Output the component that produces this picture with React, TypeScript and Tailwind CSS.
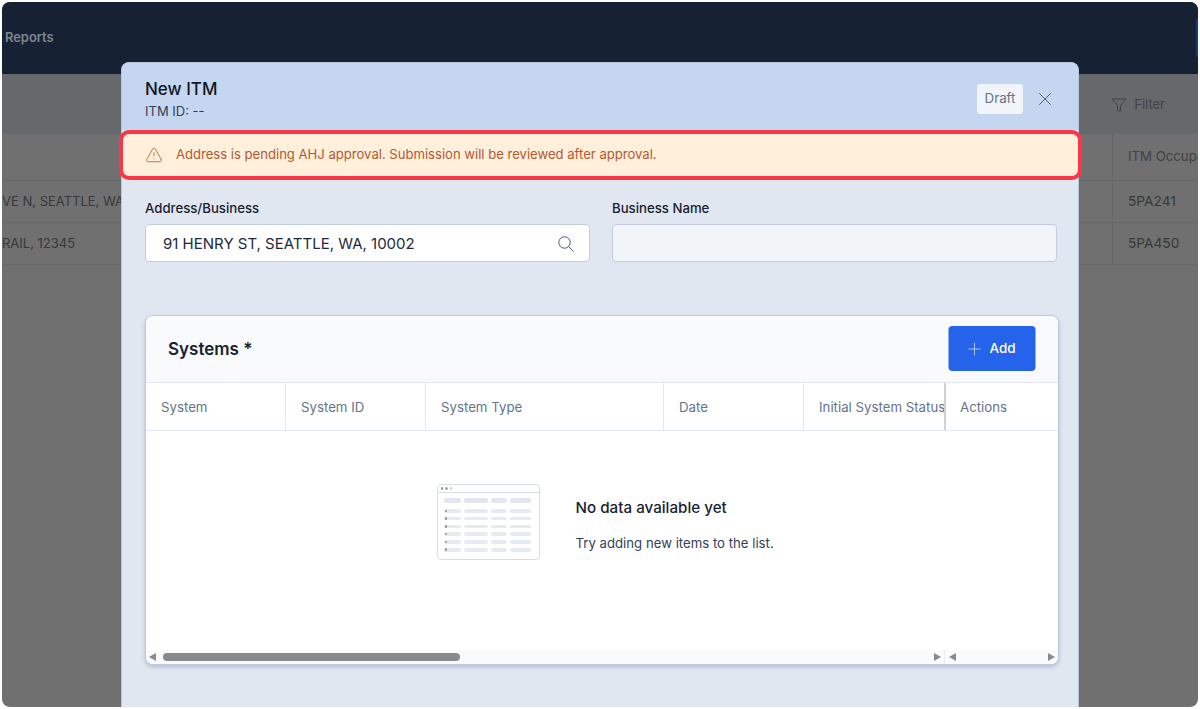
import { AlertTriangle, X, Plus } from 'lucide-react';

const columns = [
  { label: 'System', width: 'w-[140px] border-r' },
  { label: 'System ID', width: 'w-[140px] border-r' },
  { label: 'System Type', width: 'w-[238px] border-r' },
  { label: 'Date', width: 'w-[140px] border-r' },
  { label: 'Initial System Status', width: 'w-[140px]' },
];

function BackgroundPage() {
  return (
    <div className="flex flex-col h-full bg-[#707070]">
      <div className="h-[72px] shrink-0 bg-[#162133] flex items-center justify-between">
        <span className="pl-[3px] text-[12.9px] font-semibold text-[#7f858f]">Reports</span>
        <div className="w-[2px] h-[38px] bg-[#1b3a7a]" />
      </div>
      <div className="h-[60px] shrink-0 bg-[#66696b] flex items-center justify-end pr-[33px] pt-[2px]">
        <div className="flex items-center gap-[7px] text-[13px] text-[#3f4347]">
          <svg width="16" height="14" viewBox="0 0 16 14" fill="none" stroke="currentColor" strokeWidth="1" strokeLinejoin="round">
            <path d="M1 1h14L9.5 7.5V13H7.5L6.5 12V7.5Z" />
          </svg>
          <span>Filter</span>
        </div>
      </div>
      <div className="flex h-[47px] shrink-0 bg-[#707070] border-b border-[#666]">
        <div className="w-[1110px] shrink-0" />
        <div className="flex-1 border-l border-[#666] pl-[15px] flex items-center text-[13.2px] text-[#414141] whitespace-nowrap overflow-hidden">
          ITM Occupancy
        </div>
      </div>
      {[
        ['VE N, SEATTLE, WA', '5PA241'],
        ['RAIL, 12345', '5PA450'],
      ].map(([address, code]) => (
        <div key={code} className="flex h-[42px] shrink-0 border-b border-[#666] text-[#383838]">
          <div className="w-[1110px] shrink-0 flex items-center text-[13px]">{address}</div>
          <div className="flex-1 border-l border-[#666] pl-[15px] flex items-center text-[13.7px]">{code}</div>
        </div>
      ))}
    </div>
  );
}

function TableIllustration() {
  const widths = ['w-[17px]', 'w-[24px]', 'w-[16px]', 'w-[21px]'];
  return (
    <div className="w-[103px] h-[76px] rounded-[4px] border border-[#d5dde9] bg-white flex flex-col">
      <div className="h-[8px] border-b border-[#d5dde9] flex items-center gap-[2px] pl-[3px] shrink-0">
        <span className="w-[2.5px] h-[2.5px] rounded-full bg-[#8494ab]" />
        <span className="w-[2.5px] h-[2.5px] rounded-full bg-[#9aa7ba]" />
        <span className="w-[2.5px] h-[2.5px] rounded-full bg-[#c3ccd9]" />
      </div>
      <div className="flex gap-[3.3px] pl-[6px] pt-[5px]">
        {widths.map((w, i) => (
          <span key={i} className={`${w} h-[5px] rounded-[2px] bg-[#e2e7ef]`} />
        ))}
      </div>
      <div className="flex flex-col gap-[4.1px] pl-[6px] pt-[6px]">
        {[0, 1, 2, 3, 4, 5].map((row) => (
          <div key={row} className="flex gap-[3.3px] h-[3.7px]">
            {widths.map((w, i) => (
              <span key={i} className={`${w} h-full rounded-[2px] bg-[#e6ebf2] relative`}>
                {i === 0 && (
                  <span className="absolute left-[1px] top-[0.5px] w-[2.5px] h-[2.5px] rounded-full bg-[#8494ab]" />
                )}
              </span>
            ))}
          </div>
        ))}
      </div>
    </div>
  );
}

function Arrow({ dir }: { dir: 'left' | 'right' }) {
  return dir === 'left' ? (
    <span className="w-0 h-0 border-y-[4px] border-y-transparent border-r-[7px] border-r-[#8a8a8a]" />
  ) : (
    <span className="w-0 h-0 border-y-[4px] border-y-transparent border-l-[7px] border-l-[#8a8a8a]" />
  );
}

function SystemsCard() {
  return (
    <div className="h-[350px] rounded-[8px] border border-[#bcc9de] bg-white shadow-[0_2px_4px_rgba(100,116,139,0.35)] overflow-hidden flex flex-col">
      <div className="h-[67px] shrink-0 bg-[#f8fafc] flex items-center justify-between pl-[22px] pr-[22px] border-b border-[#e2e8f0]">
        <span className="text-[17px] font-semibold text-[#1a2230] mt-[1px]">Systems *</span>
        <button className="w-[87px] h-[45px] -mt-[1px] -ml-[1px] translate-x-[-0.5px] rounded-[4px] bg-[#2563eb] flex items-center justify-center gap-[5px] pr-[4px] text-[13.5px] font-medium text-white">
          <Plus size={20} strokeWidth={1.1} className="text-[#b6cbf8]" />
          Add
        </button>
      </div>
      <div className="h-[48px] shrink-0 flex border-b border-[#e2e8f0] text-[13.25px] text-[#64748b]">
        {columns.map((col) => (
          <div
            key={col.label}
            className={`${col.width} shrink-0 border-[#e2e8f0] pl-[15px] pt-[2px] flex items-center whitespace-nowrap overflow-hidden`}
          >
            {col.label}
          </div>
        ))}
        <div className="flex-1 pt-[2px] border-l-2 border-[#cfd2d6] pl-[14px] flex items-center">Actions</div>
      </div>
      <div className="flex-1 flex items-center justify-center gap-[36px] pl-[6px] pb-[37px]">
        <TableIllustration />
        <div className="flex flex-col gap-[14px] w-[198px] pt-[6px] whitespace-nowrap">
          <span className="text-[15.2px] font-medium text-[#1a2230]">No data available yet</span>
          <span className="text-[13.2px] text-[#334155]">Try adding new items to the list.</span>
        </div>
      </div>
      <div className="h-[14px] shrink-0 bg-[#fafafa] flex items-center">
        <div className="w-[799px] flex items-center pl-[3px] pr-[3px] border-r border-[#eee] h-full">
          <Arrow dir="left" />
          <div className="ml-[7px] w-[297px] h-[8px] rounded-full bg-[#8a8a8a]" />
          <div className="flex-1" />
          <Arrow dir="right" />
        </div>
        <div className="flex-1 flex items-center justify-between pl-[4px] pr-[3px]">
          <Arrow dir="left" />
          <Arrow dir="right" />
        </div>
      </div>
    </div>
  );
}

function Modal() {
  return (
    <div className="absolute left-[119px] top-[60px] w-[958px] h-[645px] rounded-t-[8px] border border-b-0 border-[#b8c7de] bg-[#e1e7f0] flex flex-col">
      <div className="h-[67px] shrink-0 rounded-t-[8px] bg-[#c5d6f0] flex items-center justify-between pl-[23px] pr-[22px] pt-[4px]">
        <div className="flex flex-col mt-[2px]">
          <span className="text-[17px] leading-[24px] font-medium text-[#111827]">New ITM</span>
          <span className="text-[13px] leading-[21px] text-[#334155]">ITM ID: --</span>
        </div>
        <div className="flex items-center gap-[11px]">
          <span className="w-[46px] h-[30px] rounded-[3px] bg-[#f1f5f9] flex items-center justify-center text-[13.3px] text-[#64748b]">
            Draft
          </span>
          <X size={22} strokeWidth={1} className="text-[#475569]" />
        </div>
      </div>
      <div className="h-[50px] shrink-0 -ml-[3px] -mr-[4px] rounded-[10px] border-4 border-[#fb3648] bg-[#ffefdb] flex items-center gap-[13px] pl-[22px] relative">
        <AlertTriangle size={18} strokeWidth={1.1} className="text-[#b25a30]" />
        <span className="text-[13.08px] text-[#b25a30]">
          Address is pending AHJ approval. Submission will be reviewed after approval.
        </span>
      </div>
      <div className="flex gap-[22px] pl-[23px] pr-[21px] pt-[19px]">
        <div className="flex-1 flex flex-col gap-[6px]">
          <label className="text-[13.2px] leading-[19px] font-medium text-[#1a2230]">Address/Business</label>
          <div className="h-[38px] rounded-[4px] border border-[#c0cde0] bg-white flex items-center justify-between pl-[17px] pr-[15px]">
            <span className="text-[15px] text-[#1e293b] pt-[2px]">91 HENRY ST, SEATTLE, WA, 10002</span>
            <svg width="16" height="16" viewBox="0 0 16 16" fill="none" stroke="#475569" strokeWidth="1" className="mt-[1px]">
              <circle cx="6.5" cy="6.5" r="5.7" />
              <path d="M10.7 10.7 15.5 15.5" />
            </svg>
          </div>
        </div>
        <div className="flex-1 flex flex-col gap-[6px]">
          <label className="text-[13.2px] leading-[19px] font-medium text-[#1a2230]">Business Name</label>
          <div className="h-[38px] rounded-[4px] border border-[#c0cde0] bg-[#f1f5fa]" />
        </div>
      </div>
      <div className="pl-[23px] pr-[19px] pt-[53px]">
        <SystemsCard />
      </div>
    </div>
  );
}

export default function App() {
  return (
    <div className="w-[1200px] h-[709px] bg-white p-[2px] overflow-hidden font-['Inter',sans-serif]">
      <div className="relative w-full h-full rounded-[8px] overflow-hidden">
        <BackgroundPage />
        <Modal />
      </div>
    </div>
  );
}
